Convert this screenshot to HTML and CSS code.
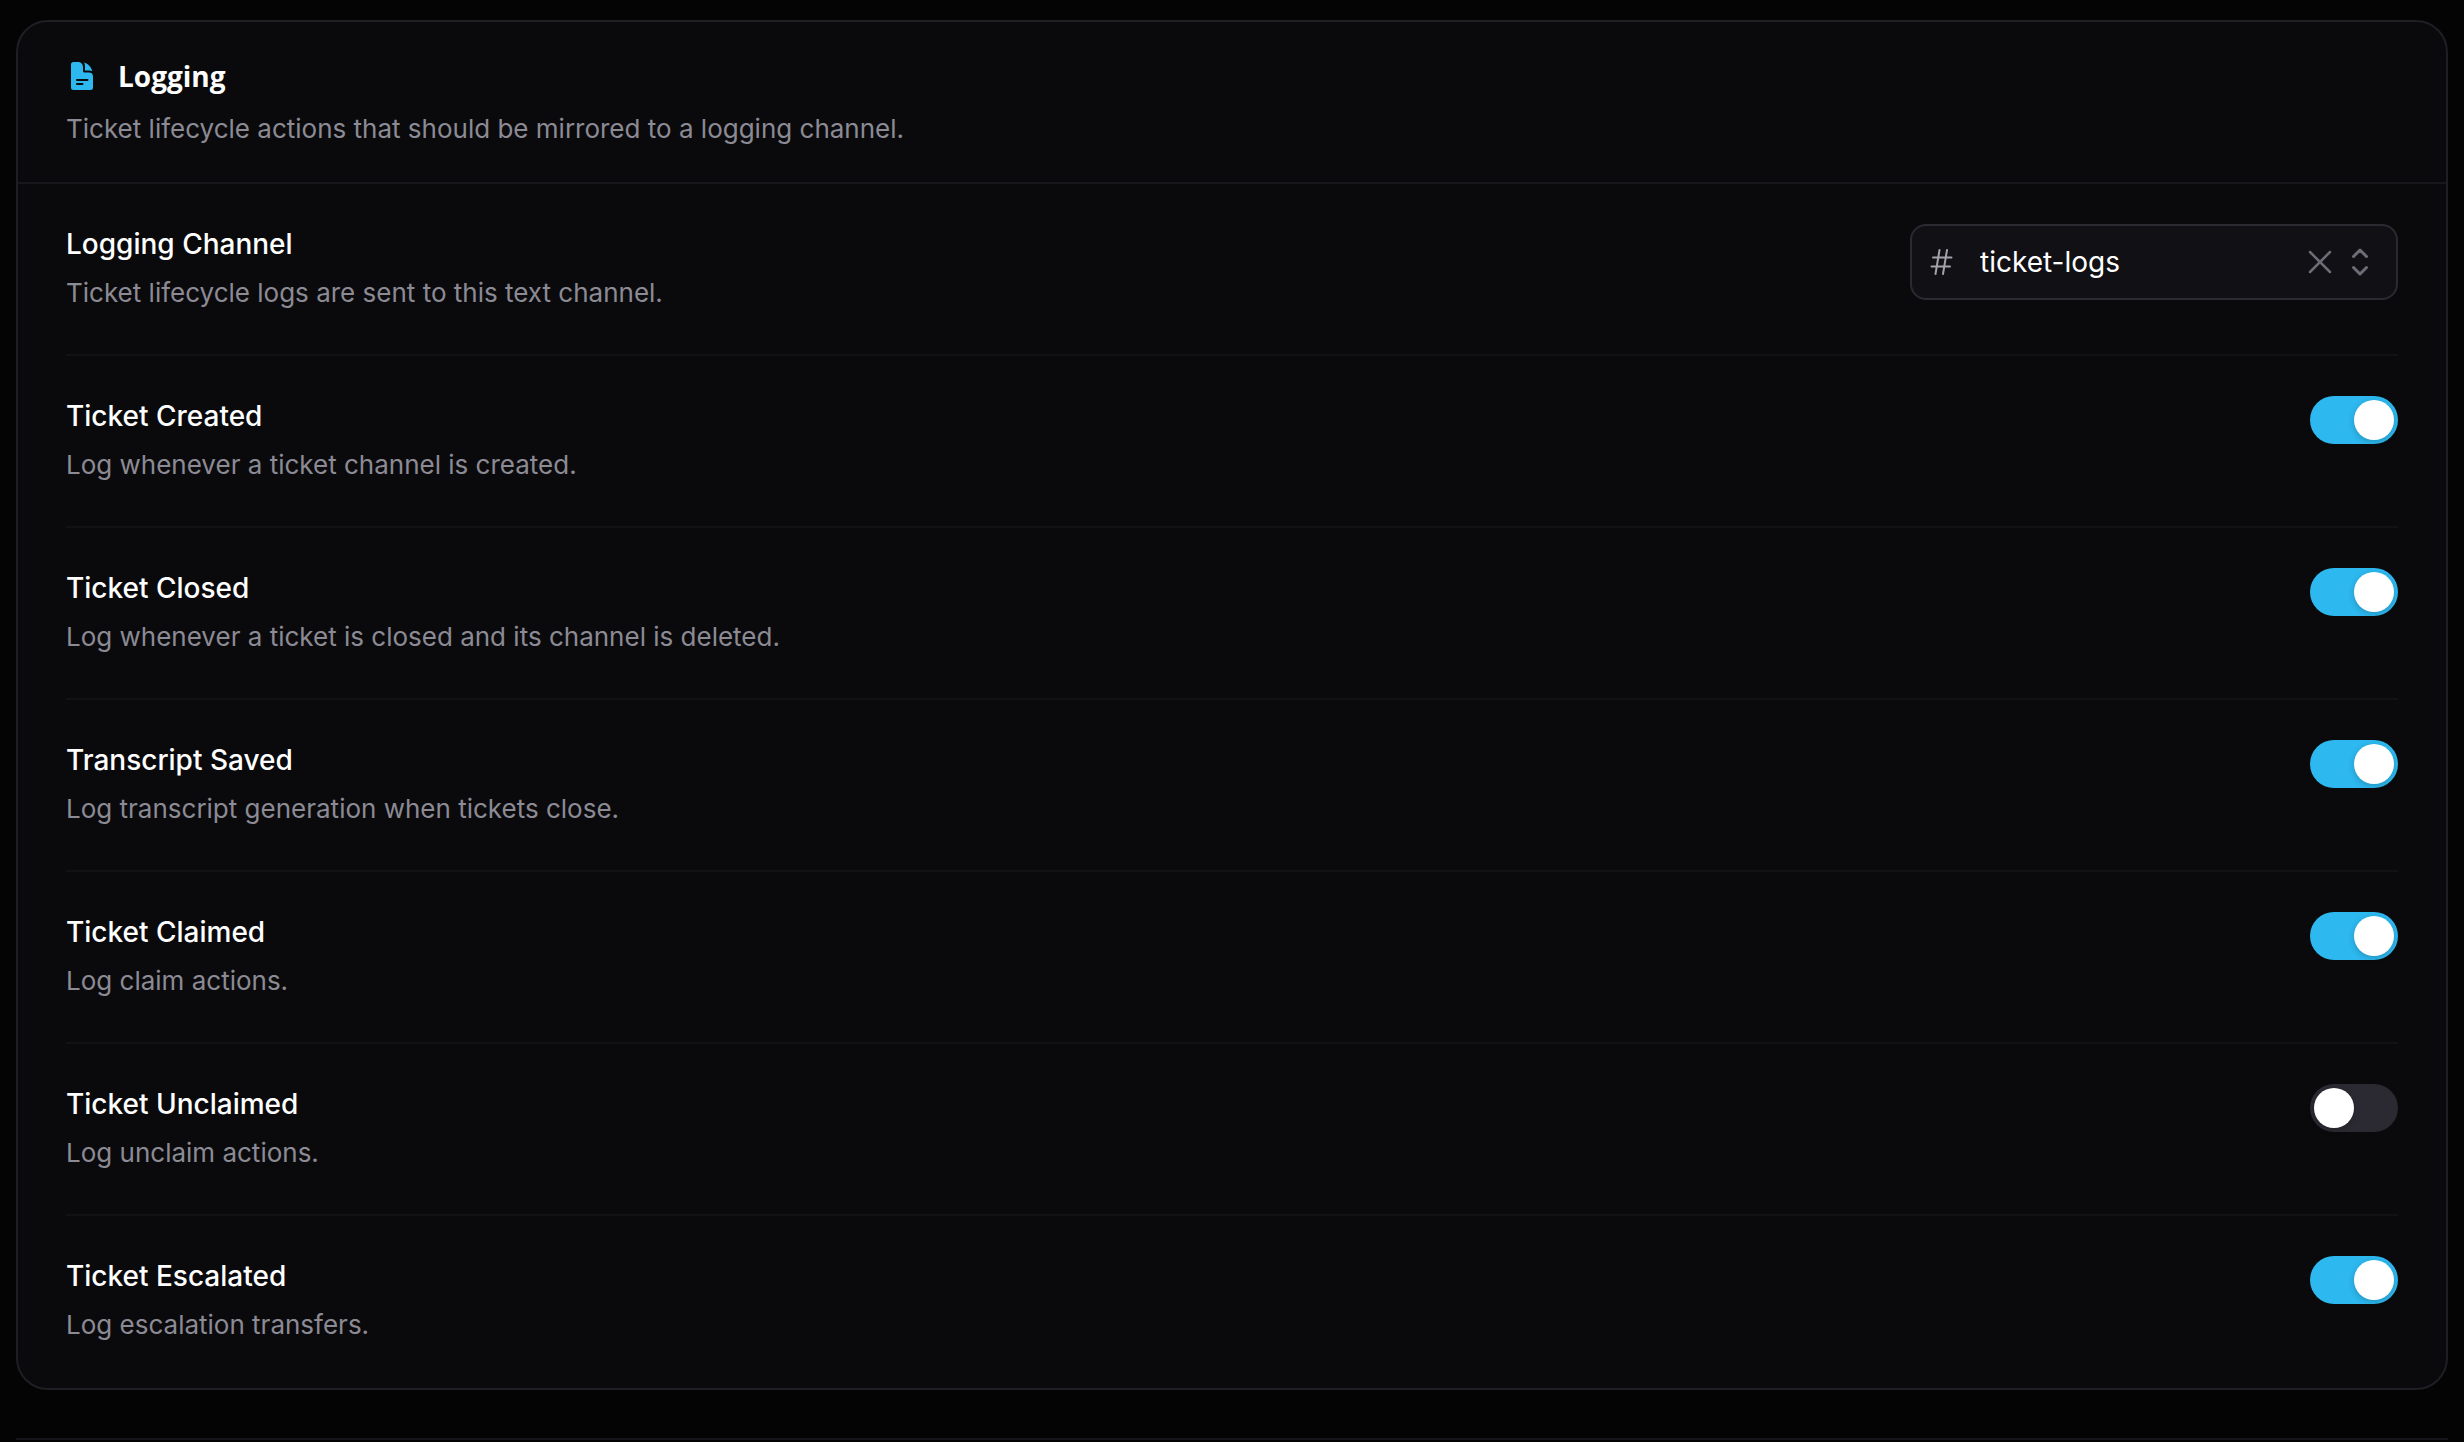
FILE: index.html
```html
<!DOCTYPE html>
<html lang="en">
<head>
    <meta charset="UTF-8">
    <meta name="viewport" content="width=device-width, initial-scale=1.0">
    <title>Ticket Logging</title>
    <link rel="stylesheet" href="styles.css">
</head>
<body>
    <main class="page">
        <section class="card">
            <header class="card-header">
                <div class="card-title">
                    <svg class="file-icon" viewBox="4 0 32 40" aria-hidden="true">
                        <path d="M11.500 6H16c2.800 0 5 2 5 5v4c0 .9.600 1.500 1.500 1.500H27c2.600 0 4 1.600 4 4V31.500a2.500 2.500 0 0 1-2.500 2.500h-17A2.500 2.500 0 0 1 9 31.500v-23A2.500 2.500 0 0 1 11.500 6z"/>
                        <path d="M22 6.500c4 1 7.300 4.500 8.300 8.600-1-.4-2.200-.6-3.300-.6h-4V11c0-1.800-.2-3.200-1-4.500z"/>
                        <path class="file-lines" d="M15 24h10.500M15 28h5.500"/>
                    </svg>
                    <h2>Logging</h2>
                </div>
                <p class="description">Ticket lifecycle actions that should be mirrored to a logging channel.</p>
            </header>

            <div class="settings">
                <div class="setting">
                    <div class="setting-text">
                        <label for="logging-channel">Logging Channel</label>
                        <p class="description">Ticket lifecycle logs are sent to this text channel.</p>
                    </div>
                    <div class="channel-select">
                        <svg class="hash-icon" viewBox="0 0 24 28" aria-hidden="true">
                            <path d="M9.500 2l-4 24M17 2l-4 24M3 9.500h18.500M1.500 18.500h18.500"/>
                        </svg>
                        <select id="logging-channel">
                            <option value="ticket-logs">ticket-logs</option>
                        </select>
                        <button type="button" class="clear-button" aria-label="Clear channel">
                            <svg viewBox="0 0 24 24"><path d="M2 2l20 20M22 2l-20 20"/></svg>
                        </button>
                        <svg class="chevrons-icon" viewBox="0 0 20 32" aria-hidden="true">
                            <path d="M3.500 10.500l6.500-6.500 6.500 6.500M3.500 21.500l6.500 6.500 6.500-6.500"/>
                        </svg>
                    </div>
                </div>

                <div class="setting">
                    <div class="setting-text">
                        <label for="ticket-created">Ticket Created</label>
                        <p class="description">Log whenever a ticket channel is created.</p>
                    </div>
                    <input type="checkbox" role="switch" class="toggle" id="ticket-created" checked>
                </div>

                <div class="setting">
                    <div class="setting-text">
                        <label for="ticket-closed">Ticket Closed</label>
                        <p class="description">Log whenever a ticket is closed and its channel is deleted.</p>
                    </div>
                    <input type="checkbox" role="switch" class="toggle" id="ticket-closed" checked>
                </div>

                <div class="setting">
                    <div class="setting-text">
                        <label for="transcript-saved">Transcript Saved</label>
                        <p class="description">Log transcript generation when tickets close.</p>
                    </div>
                    <input type="checkbox" role="switch" class="toggle" id="transcript-saved" checked>
                </div>

                <div class="setting">
                    <div class="setting-text">
                        <label for="ticket-claimed">Ticket Claimed</label>
                        <p class="description">Log claim actions.</p>
                    </div>
                    <input type="checkbox" role="switch" class="toggle" id="ticket-claimed" checked>
                </div>

                <div class="setting">
                    <div class="setting-text">
                        <label for="ticket-unclaimed">Ticket Unclaimed</label>
                        <p class="description">Log unclaim actions.</p>
                    </div>
                    <input type="checkbox" role="switch" class="toggle" id="ticket-unclaimed">
                </div>

                <div class="setting">
                    <div class="setting-text">
                        <label for="ticket-escalated">Ticket Escalated</label>
                        <p class="description">Log escalation transfers.</p>
                    </div>
                    <input type="checkbox" role="switch" class="toggle" id="ticket-escalated" checked>
                </div>
            </div>
        </section>

        <hr class="page-divider">
    </main>
</body>
</html>
```

FILE: styles.css
```css
* {
    box-sizing: border-box;
}

body {
    margin: 0;
    background-color: #040404;
    color: #fff;
    font-family: Inter, sans-serif;
    font-size: 26px;
}

.page {
    padding: 20px 16px 0;
}

.card {
    background-color: #0a0a0c;
    border: 2px solid #1f1e25;
    border-radius: 32px;
}

.card-header {
    padding: 32px 48px;
    border-bottom: 2px solid #18181c;
}

.card-title {
    display: flex;
    align-items: center;
    gap: 20px;
    margin-bottom: 10px;
}

.file-icon {
    width: 32px;
    height: 40px;
    fill: #2db8ef;
}

.file-lines {
    fill: none;
    stroke: #0a0a0c;
    stroke-width: 2;
    stroke-linecap: round;
}

h2 {
    margin: 0;
    font-family: "Open Sans", sans-serif;
    font-size: 28px;
    font-weight: 700;
    line-height: 44px;
}

.description {
    margin: 0;
    color: #8c8a94;
    line-height: 42px;
}

.settings {
    padding: 0 48px;
}

.setting {
    display: flex;
    justify-content: space-between;
    align-items: flex-start;
    gap: 48px;
    padding: 40px 0;
    border-bottom: 2px solid #121215;
}

.setting:last-child {
    border-bottom-color: transparent;
}

.setting-text label {
    display: block;
    margin-bottom: 8px;
    font-size: 28px;
    font-weight: 500;
    line-height: 40px;
}

.channel-select {
    display: flex;
    align-items: center;
    width: 488px;
    height: 76px;
    padding: 0 26px 0 18px;
    background-color: #111015;
    border: 2px solid #2b2a32;
    border-radius: 16px;
}

.channel-select svg {
    flex: none;
    fill: none;
    stroke: #6e6c77;
    stroke-width: 2.5;
    stroke-linecap: round;
    stroke-linejoin: round;
}

.channel-select .hash-icon {
    width: 24px;
    height: 28px;
    stroke: #a3a1ab;
    stroke-width: 2;
}

.channel-select select {
    flex: 1;
    min-width: 0;
    height: 100%;
    margin-left: 26px;
    padding: 0;
    appearance: none;
    background: none;
    border: none;
    color: #fff;
    font-family: inherit;
    font-size: 28px;
}

.channel-select option {
    background-color: #111015;
}

.clear-button {
    display: flex;
    margin-right: 18px;
    padding: 0;
    background: none;
    border: none;
    cursor: pointer;
}

.clear-button svg {
    width: 24px;
    height: 24px;
}

.channel-select .chevrons-icon {
    width: 20px;
    height: 32px;
    stroke-width: 3;
}

.toggle {
    flex: none;
    display: flex;
    width: 88px;
    height: 48px;
    margin: 0;
    padding: 4px;
    appearance: none;
    background-color: #2b2a32;
    border-radius: 24px;
    cursor: pointer;
}

.toggle::before {
    content: "";
    width: 40px;
    height: 40px;
    background-color: #fff;
    border-radius: 50%;
    box-shadow: 0 2px 6px rgba(0, 0, 0, 0.2);
}

.toggle:checked {
    justify-content: flex-end;
    background-color: #2db8ef;
}

.page-divider {
    height: 2px;
    margin: 48px 0 0;
    background-color: #15141a;
    border: none;
}
```
